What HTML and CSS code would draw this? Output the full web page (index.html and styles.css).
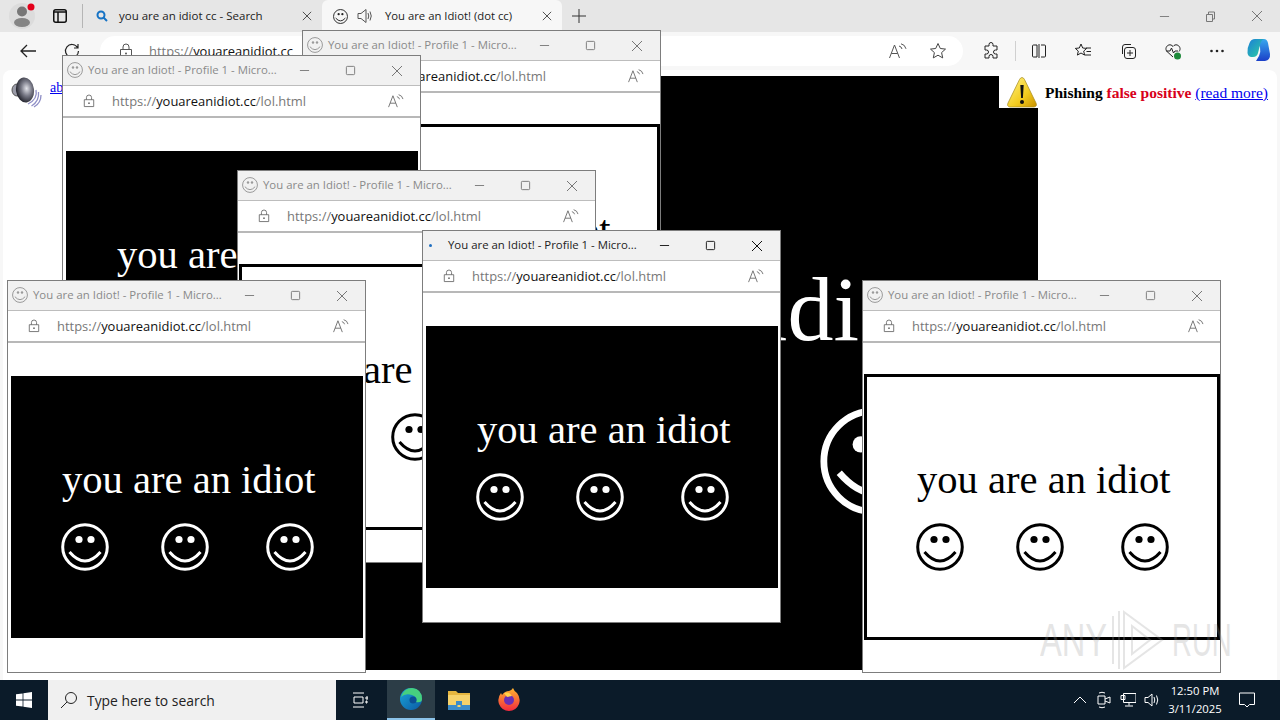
FILE: index.html
```html
<!DOCTYPE html>
<html lang="en">
<head>
    <meta charset="UTF-8">
    <title>You are an Idiot! (dot cc)</title>
    <link rel="stylesheet" href="styles.css">
</head>
<body>
    <svg class="defs" width="0" height="0">
        <symbol id="smile" viewBox="-24 -24 48 48">
            <circle r="22.3" fill="none" stroke="currentColor" stroke-width="3"/>
            <circle cx="-6" cy="-7.5" r="3.6" fill="currentColor"/>
            <circle cx="6" cy="-7.5" r="3.6" fill="currentColor"/>
            <path d="M-15.5 5Q0 23 15.5 5" fill="none" stroke="currentColor" stroke-width="3"/>
        </symbol>
        <symbol id="lock" viewBox="0 0 14 16">
            <path d="M1.5 6.5h11v8h-11zM4 6.5V4a3 3 0 0 1 6 0v2.5" fill="none" stroke="currentColor"/>
            <circle cx="7" cy="10.5" r="1" fill="currentColor"/>
        </symbol>
        <symbol id="read" viewBox="0 0 18 16">
            <path d="M.5 15L5.5 2l5 13M2.3 10.5h6.4" fill="none" stroke="currentColor"/>
            <path d="M10 3q2.500 .5 3 3M12 .8q4 .8 5 5" fill="none" stroke="currentColor"/>
        </symbol>
        <symbol id="min" viewBox="0 0 12 12"><path d="M1 6h10" stroke="currentColor" fill="none"/></symbol>
        <symbol id="max" viewBox="0 0 12 12"><rect x="1.500" y="1.500" width="9" height="9" rx="1" stroke="currentColor" fill="none"/></symbol>
        <symbol id="close" viewBox="0 0 12 12"><path d="M1 1l10 10M11 1L1 11" stroke="currentColor" fill="none"/></symbol>
    </svg>

    <!-- tab strip -->
    <div class="tabstrip">
        <div class="avatar">
            <svg width="28" height="28" viewBox="0 0 28 28"><circle cx="14" cy="14" r="13" fill="#dcdcdc"/><circle cx="14" cy="9.500" r="5" fill="#777"/><ellipse cx="14" cy="20.500" rx="8" ry="4.500" fill="#858585"/><circle cx="23" cy="5" r="3.500" fill="#e4001b"/></svg>
        </div>
        <svg class="vtabs" width="14" height="14" viewBox="0 0 14 14"><rect x=".75" y=".75" width="12.500" height="12.500" rx="2" fill="none" stroke="#111" stroke-width="1.500"/><path d="M1 3h12M5 3v10" stroke="#111" stroke-width="1.500"/></svg>
        <div class="tab-sep"></div>
        <div class="tab">
            <svg width="12" height="12" viewBox="0 0 12 12"><circle cx="5" cy="5" r="3.500" fill="none" stroke="#1673c5" stroke-width="2"/><path d="M7.500 7.500l3.500 3.500" stroke="#1673c5" stroke-width="2"/></svg>
            <span class="tab-text">you are an idiot cc - Search</span>
            <svg class="tab-x" width="10" height="10"><use href="#close"/></svg>
        </div>
        <div class="tab tab-active">
            <svg class="tab-smile" width="15" height="15"><use href="#smile"/></svg>
            <svg width="16" height="16" viewBox="0 0 16 16"><path d="M1 5.500h3L9 1.500v13L4 10.500H1z" fill="none" stroke="#555"/><path d="M11 5q1.500 3 0 6M13 3.500q2.500 4.500 0 9" fill="none" stroke="#555"/></svg>
            <span class="tab-text">You are an Idiot! (dot cc)</span>
            <svg class="tab-x" width="10" height="10"><use href="#close"/></svg>
        </div>
        <svg class="new-tab" width="14" height="14" viewBox="0 0 14 14"><path d="M7 0v14M0 7h14" stroke="#333"/></svg>
        <div class="window-controls">
            <svg width="11" height="11"><use href="#min"/></svg>
            <svg width="11" height="11" viewBox="0 0 11 11"><path d="M1.500 3.500h6v7h-6zM3.500 3.500V1h6v7H7.500" fill="none" stroke="currentColor"/></svg>
            <svg width="12" height="12"><use href="#close"/></svg>
        </div>
    </div>

    <!-- toolbar -->
    <div class="toolbar">
        <svg class="back" width="16" height="14" viewBox="0 0 16 14"><path d="M7 1L1 7l6 6M1 7h15" fill="none" stroke="#222" stroke-width="1.300"/></svg>
        <svg class="reload" width="16" height="16" viewBox="0 0 16 16"><path d="M13.500 4.500A6.500 6.500 0 1 0 14.500 8M14 1v4h-4" fill="none" stroke="#222" stroke-width="1.200"/></svg>
        <div class="address">
            <svg class="address-lock" width="14" height="16"><use href="#lock"/></svg>
            <span class="url">https://<b>youareanidiot.cc</b></span>
            <svg class="address-read" width="18" height="16"><use href="#read"/></svg>
            <svg width="18" height="18" viewBox="0 0 18 18"><path d="M9 1.500l2.300 5 5.200.6-3.900 3.500 1.100 5.300L9 13.200l-4.700 2.700 1.100-5.300L1.500 7.100l5.200-.6z" fill="none" stroke="#444"/></svg>
        </div>
        <div class="tools">
            <svg width="18" height="18" viewBox="0 0 18 18"><path d="M7 2.500a2 2 0 0 1 4 0V4h4v4h-1.500a2 2 0 0 0 0 4H15v4h-4v-1.500a2 2 0 0 0-4 0V16H3v-4h1.500a2 2 0 0 0 0-4H3V4h4z" fill="none" stroke="#222"/></svg>
            <div class="tool-sep"></div>
            <svg width="16" height="16" viewBox="0 0 16 16"><path d="M6 2H2.500A1 1 0 0 0 1.500 3v10a1 1 0 0 0 1 1H6zM8 1v14M10 2h3.500a1 1 0 0 1 1 1v10a1 1 0 0 1-1 1H10" fill="none" stroke="#222"/></svg>
            <svg width="18" height="18" viewBox="0 0 18 18"><path d="M7 2l1.700 4 4 .4-3 2.700.9 4L7 11l-3.600 2.100.9-4-3-2.700 4-.4zM12 6h5M12.500 9.500H17M11 13h6" fill="none" stroke="#222"/></svg>
            <svg width="18" height="18" viewBox="0 0 18 18"><rect x="5.500" y="5.500" width="11" height="11" rx="2.500" fill="none" stroke="#222"/><path d="M11 8v6M8 11h6M3.500 12V5a2.500 2.500 0 0 1 2.500-2.500h6" fill="none" stroke="#222"/></svg>
            <svg width="18" height="18" viewBox="0 0 18 18"><path d="M9 15L3 9.500C-.500 5.500 5.500 0 9 4.500 12.500 0 18.500 5.500 15 9.500" fill="none" stroke="#222"/><path d="M2 9h4l1.500-3 2 5L11 9h3" fill="none" stroke="#222"/><circle cx="13.500" cy="14" r="3.500" fill="#1f8a3b"/></svg>
            <svg class="more" width="16" height="4" viewBox="0 0 16 4"><circle cx="2.500" cy="2" r="1.300" fill="#222"/><circle cx="8" cy="2" r="1.300" fill="#222"/><circle cx="13.500" cy="2" r="1.300" fill="#222"/></svg>
            <svg class="copilot" width="24" height="26" viewBox="0 0 24 26"><defs><linearGradient id="cp1" x1="0" y1="0" x2="1" y2="1"><stop offset="0" stop-color="#1b7fd8"/><stop offset="1" stop-color="#2fd0a0"/></linearGradient><linearGradient id="cp2" x1="0" y1="0" x2="0" y2="1"><stop offset="0" stop-color="#38a8ee"/><stop offset="1" stop-color="#1b3fc8"/></linearGradient></defs><path d="M8 1h9q3 0 4 4l2 11q.500 6-5 7H9l3-5q2-4 1-9z" fill="url(#cp2)"/><path d="M8 1h9q-3 1-4 6l-2 8q-1 4-5 4H4q-3-.500-3.500-4Q0 10 2.500 5 4 1 8 1z" fill="url(#cp1)"/></svg>
        </div>
    </div>

    <!-- main page behind the popups -->
    <main class="page">
        <svg class="speaker" width="32" height="32" viewBox="0 0 32 32"><defs><radialGradient id="sp" cx=".6" cy=".45" r=".6"><stop offset="0" stop-color="#e2e3ea"/><stop offset=".5" stop-color="#777885"/><stop offset="1" stop-color="#22232c"/></radialGradient></defs><ellipse cx="6" cy="13" rx="5" ry="6" fill="#9a9ba8" stroke="#555"/><ellipse cx="14" cy="13" rx="9" ry="12.500" fill="url(#sp)" transform="rotate(-8 14 13)"/><path d="M25 13q2 9-8 14M27.500 15q1 9-7 14M30 18q0 8-7 12" fill="none" stroke="#8f8fc6" stroke-width="1.300"/></svg>
        <a class="about" href="#">about</a>
        <div class="idiot idiot-black idiot-huge">
            <p>you are an idiot</p>
            <div class="faces"><svg><use href="#smile"/></svg><svg><use href="#smile"/></svg><svg><use href="#smile"/></svg></div>
        </div>
        <div class="phish">
            <svg width="32" height="32" viewBox="0 0 32 32"><defs><linearGradient id="wa" x1="0" y1="0" x2="1" y2="1"><stop offset="0" stop-color="#fff58a"/><stop offset=".6" stop-color="#f3cb1e"/><stop offset="1" stop-color="#c99200"/></linearGradient></defs><path d="M16 1.500q1.500 0 2.500 2L30 27q1.500 3.500-2 4H4q-3.500-.500-2-4L13.500 3.500q1-2 2.500-2z" fill="url(#wa)" stroke="#a58a20" stroke-width=".7"/><path d="M14.300 9h3.400l-.8 13h-1.800z" fill="#111"/><circle cx="16" cy="26" r="2" fill="#111"/></svg>
            <p class="phish-text">Phishing <span class="phish-red">false positive</span> <a href="#">(read more)</a></p>
        </div>
    </main>

    <!-- taskbar -->
    <footer class="taskbar">
        <svg class="start" width="16" height="16" viewBox="0 0 16 16"><path d="M0 2.300l6.600-.9v6.200H0zM7.400 1.300L16 0v7.600H7.400zM0 8.400h6.600v6.200L0 13.700zM7.400 8.400H16V16l-8.600-1.300z" fill="#fff"/></svg>
        <div class="search">
            <svg width="18" height="18" viewBox="0 0 18 18"><circle cx="11" cy="7" r="5.500" fill="none" stroke="#222"/><path d="M7 11l-6 6" stroke="#222"/></svg>
            <span>Type here to search</span>
        </div>
        <div class="task-icon"><svg width="16" height="16" viewBox="0 0 16 16"><path d="M1 1h11M1 15h11M2 5h9v6H2zM14 5h2v2h-2zM14 9h1v2h-1z" fill="none" stroke="#fff"/></svg></div>
        <div class="task-icon task-active"><svg width="24" height="24" viewBox="0 0 24 24"><defs><linearGradient id="ed" x1="0" y1="0" x2="1" y2="1"><stop offset="0" stop-color="#1aa6d8"/><stop offset="1" stop-color="#0c59a4"/></linearGradient></defs><circle cx="12" cy="12" r="11" fill="url(#ed)"/><path d="M2 10Q5 1 13 1q10 1 10 11 0 4-6 3 2-5-4-7Q6 6 2 10z" fill="#46d07f"/><circle cx="14" cy="13" r="3.500" fill="#0b4f94"/></svg></div>
        <div class="task-icon"><svg width="22" height="20" viewBox="0 0 22 20"><path d="M0 1h8l2 2h12v4H0z" fill="#e5b53f"/><path d="M0 5h22v15H0z" fill="#f6d26b"/><rect x="0" y="15" width="22" height="5" fill="#3c8cc9"/><rect x="8" y="11" width="6" height="6" fill="#3c8cc9"/><rect x="9.500" y="15" width="3" height="2" fill="#f6d26b"/></svg></div>
        <div class="task-icon task-fox"><svg width="24" height="24" viewBox="0 0 24 24"><defs><linearGradient id="ff" x1="0" y1="0" x2="0" y2="1"><stop offset="0" stop-color="#ffb52e"/><stop offset="1" stop-color="#f3283f"/></linearGradient></defs><path d="M12 3q2 0 4-3 1 3 4 5 4 5 2 11-3 7-10 7T2 16Q0 10 4 5l1 2q3-4 7-4z" fill="url(#ff)"/><circle cx="12" cy="12" r="5" fill="#6b2fb5"/><path d="M7 5q5-2 8 3l-5 1z" fill="#ffd24a"/></svg></div>
        <div class="tray">
            <svg width="14" height="8" viewBox="0 0 14 8"><path d="M1 7l6-6 6 6" fill="none" stroke="#fff"/></svg>
            <svg width="14" height="18" viewBox="0 0 14 18"><path d="M1 5h7v8H1zM8 8l5-2v6l-5-2M2 2q3-1.500 6 0M2 16q3 1.500 6 0" fill="none" stroke="#fff"/></svg>
            <svg class="tray-net" width="16" height="16" viewBox="0 0 16 16"><path d="M3.500 1.500H16v9H3.500zM1 3.500h4v4H1zM9 10.500v3M5 14h8" fill="none" stroke="#fff"/></svg>
            <svg class="tray-vol" width="16" height="16" viewBox="0 0 16 16"><path d="M1 5.500h3L8 2v12L4 10.500H1zM10 5q1.500 3 0 6M12.500 3.500q2.500 4.500 0 9" fill="none" stroke="#fff"/></svg>
            <div class="clock">12:50 PM<br>3/11/2025</div>
            <svg class="notify" width="16" height="16" viewBox="0 0 16 16"><path d="M.5 1h15v11.500h-5L8 15l-2.500-2.500h-5z" fill="none" stroke="#fff"/></svg>
        </div>
    </footer>

    <!-- popup windows, lowest first -->
    <section class="popup popup-1">
        <header class="popup-title">
            <svg class="popup-fav" width="16" height="16"><use href="#smile"/></svg>
            <span>You are an Idiot! - Profile 1 - Micro...</span>
            <div class="popup-btns"><svg width="11" height="11"><use href="#min"/></svg><svg width="11" height="11"><use href="#max"/></svg><svg width="12" height="12"><use href="#close"/></svg></div>
        </header>
        <div class="popup-url"><svg width="12" height="14"><use href="#lock"/></svg><span class="url">https://<b>youareanidiot.cc</b>/lol.html</span><svg class="read" width="16" height="14"><use href="#read"/></svg></div>
        <div class="idiot idiot-white">
            <p>you are an idiot</p>
            <div class="faces"><svg><use href="#smile"/></svg><svg><use href="#smile"/></svg><svg><use href="#smile"/></svg></div>
        </div>
    </section>

    <section class="popup popup-2">
        <header class="popup-title">
            <svg class="popup-fav" width="16" height="16"><use href="#smile"/></svg>
            <span>You are an Idiot! - Profile 1 - Micro...</span>
            <div class="popup-btns"><svg width="11" height="11"><use href="#min"/></svg><svg width="11" height="11"><use href="#max"/></svg><svg width="12" height="12"><use href="#close"/></svg></div>
        </header>
        <div class="popup-url"><svg width="12" height="14"><use href="#lock"/></svg><span class="url">https://<b>youareanidiot.cc</b>/lol.html</span><svg class="read" width="16" height="14"><use href="#read"/></svg></div>
        <div class="idiot idiot-black">
            <p>you are an idiot</p>
            <div class="faces"><svg><use href="#smile"/></svg><svg><use href="#smile"/></svg><svg><use href="#smile"/></svg></div>
        </div>
    </section>

    <section class="popup popup-3">
        <header class="popup-title">
            <svg class="popup-fav" width="16" height="16"><use href="#smile"/></svg>
            <span>You are an Idiot! - Profile 1 - Micro...</span>
            <div class="popup-btns"><svg width="11" height="11"><use href="#min"/></svg><svg width="11" height="11"><use href="#max"/></svg><svg width="12" height="12"><use href="#close"/></svg></div>
        </header>
        <div class="popup-url"><svg width="12" height="14"><use href="#lock"/></svg><span class="url">https://<b>youareanidiot.cc</b>/lol.html</span><svg class="read" width="16" height="14"><use href="#read"/></svg></div>
        <div class="idiot idiot-white">
            <p>you are an idiot</p>
            <div class="faces"><svg><use href="#smile"/></svg><svg><use href="#smile"/></svg><svg><use href="#smile"/></svg></div>
        </div>
    </section>

    <section class="popup popup-4">
        <header class="popup-title">
            <svg class="popup-fav" width="16" height="16"><use href="#smile"/></svg>
            <span>You are an Idiot! - Profile 1 - Micro...</span>
            <div class="popup-btns"><svg width="11" height="11"><use href="#min"/></svg><svg width="11" height="11"><use href="#max"/></svg><svg width="12" height="12"><use href="#close"/></svg></div>
        </header>
        <div class="popup-url"><svg width="12" height="14"><use href="#lock"/></svg><span class="url">https://<b>youareanidiot.cc</b>/lol.html</span><svg class="read" width="16" height="14"><use href="#read"/></svg></div>
        <div class="idiot idiot-black">
            <p>you are an idiot</p>
            <div class="faces"><svg><use href="#smile"/></svg><svg><use href="#smile"/></svg><svg><use href="#smile"/></svg></div>
        </div>
    </section>

    <section class="popup popup-5">
        <header class="popup-title">
            <svg class="popup-fav" width="16" height="16"><use href="#smile"/></svg>
            <span>You are an Idiot! - Profile 1 - Micro...</span>
            <div class="popup-btns"><svg width="11" height="11"><use href="#min"/></svg><svg width="11" height="11"><use href="#max"/></svg><svg width="12" height="12"><use href="#close"/></svg></div>
        </header>
        <div class="popup-url"><svg width="12" height="14"><use href="#lock"/></svg><span class="url">https://<b>youareanidiot.cc</b>/lol.html</span><svg class="read" width="16" height="14"><use href="#read"/></svg></div>
        <div class="idiot idiot-white">
            <p>you are an idiot</p>
            <div class="faces"><svg><use href="#smile"/></svg><svg><use href="#smile"/></svg><svg><use href="#smile"/></svg></div>
        </div>
    </section>

    <section class="popup popup-6 popup-focus">
        <header class="popup-title">
            <i class="popup-dot"></i>
            <span>You are an Idiot! - Profile 1 - Micro...</span>
            <div class="popup-btns"><svg width="11" height="11"><use href="#min"/></svg><svg width="11" height="11"><use href="#max"/></svg><svg width="12" height="12"><use href="#close"/></svg></div>
        </header>
        <div class="popup-url"><svg width="12" height="14"><use href="#lock"/></svg><span class="url">https://<b>youareanidiot.cc</b>/lol.html</span><svg class="read" width="16" height="14"><use href="#read"/></svg></div>
        <div class="idiot idiot-black">
            <p>you are an idiot</p>
            <div class="faces"><svg><use href="#smile"/></svg><svg><use href="#smile"/></svg><svg><use href="#smile"/></svg></div>
        </div>
    </section>

    <!-- sandbox watermark -->
    <div class="watermark">
        <span class="mark-any">ANY</span>
        <svg width="56" height="64" viewBox="0 0 56 64"><path d="M3 8v48M9 3v58M14 4l38 28-38 28zM22 18l18 14-18 14z" fill="none" stroke="#999" stroke-width="2"/></svg>
        <span class="mark-run">RUN</span>
    </div>
</body>
</html>
```

FILE: styles.css
```css
html, body {
    margin: 0;
    padding: 0;
}

body {
    position: relative;
    display: flex;
    flex-direction: column;
    width: 1280px;
    height: 720px;
    overflow: hidden;
    background-color: #f7f7f7;
    font-family: "Open Sans", "Noto Sans", sans-serif;
    color: #222;
}

svg {
    flex-shrink: 0;
    display: block;
}

.defs {
    position: absolute;
}

/* Tab strip */
.tabstrip {
    display: flex;
    align-items: center;
    height: 32px;
    background-color: #e6e6e6;
    font-size: 11.5px;
}

.avatar {
    width: 28px;
    margin: -1px 0 0 8px;
}

.vtabs {
    margin-left: 17px;
}

.tab-sep {
    width: 1px;
    height: 24px;
    margin: 0 1px 0 15px;
    background-color: #b5b5b5;
}

.tab {
    display: flex;
    align-items: center;
    width: 238px;
    height: 32px;
    padding: 0 10px 0 12px;
    box-sizing: border-box;
}

.tab-text {
    flex: 1;
    margin: -2px 0 0 11px;
    white-space: nowrap;
}

.tab-x {
    color: #333;
}

.tab-active {
    width: 240px;
    padding-left: 11px;
    background-color: #f7f7f7;
    border-radius: 6px 6px 0 0;
    font-size: 11.3px;
}

.tab-active .tab-text {
    margin-left: 12px;
}

.tab-smile {
    margin-right: 9px;
    color: #222;
}

.new-tab {
    margin-left: 10px;
}

.window-controls {
    display: flex;
    align-items: center;
    gap: 35px;
    margin-left: auto;
    margin-right: 17px;
    color: #777;
}

/* Toolbar */
.toolbar {
    display: flex;
    align-items: center;
    height: 38px;
    background-color: #f7f7f7;
}

.back {
    margin-left: 20px;
}

.reload {
    margin-left: 28px;
}

.address {
    display: flex;
    align-items: center;
    width: 863px;
    height: 30px;
    margin-left: 20px;
    padding: 0 16px 0 19px;
    box-sizing: border-box;
    background-color: #fff;
    border-radius: 15px;
    color: #555;
}

.address .url {
    flex: 1;
    margin-left: 16px;
}

.address-read {
    margin-right: 22px;
}

.url {
    font-size: 12.95px;
    color: #777;
    white-space: nowrap;
}

.url b {
    font-weight: 400;
    color: #111;
}

.tools {
    display: flex;
    align-items: center;
    margin-left: 19px;
    gap: 27px;
}

.tool-sep {
    width: 1px;
    height: 20px;
    margin: 0 -12px;
    background-color: #d0d0d0;
}

.more {
    margin-right: -1px;
}

.copilot {
    margin-left: -4px;
}

/* Page behind the popups */
.page {
    position: relative;
    flex: 1;
    display: flex;
    justify-content: flex-end;
    margin: 0 3px;
    background-color: #fff;
    border-radius: 8px 8px 0 0;
    font-family: "Liberation Serif", serif;
}

.speaker {
    position: absolute;
    left: 8px;
    top: 7px;
}

.about {
    position: absolute;
    left: 47px;
    top: 10px;
    font-size: 14px;
    color: #00e;
}

.phish {
    position: absolute;
    left: 996px;
    top: 6px;
    display: flex;
    gap: 7px;
    width: 276px;
    height: 32px;
    background-color: #fff;
}

.phish svg {
    margin-left: 7px;
}

.phish-text {
    margin: 8px 0 0;
    font-size: 15.5px;
    font-weight: 700;
    color: #000;
    white-space: nowrap;
}

.phish-red {
    color: #d8001a;
}

.phish-text a {
    font-weight: 400;
    color: #00e;
}

/* The joke page itself, sized in em so the big copy scales with it */
.idiot {
    width: 8.67em;
    height: 6.453em;
    padding: 2.065em 0 0 1.255em;
    box-sizing: border-box;
    overflow: hidden;
    font-family: "Liberation Serif", serif;
    font-size: 40.6px;
    line-height: 1;
}

.idiot p {
    margin: 0;
    white-space: nowrap;
}

.idiot-black {
    background-color: #000;
    color: #fff;
}

.idiot-white {
    background-color: #fff;
    color: #000;
    outline: 3px solid #000;
    outline-offset: -1px;
}

.idiot-huge {
    align-self: flex-start;
    margin: 6px 239px 0 0;
    padding-top: 2.03em;
    font-size: 92px;
}

.faces {
    display: flex;
    gap: 1.28em;
    margin: .55em 0 0 -.025em;
}

.idiot-huge .faces {
    margin: .57em 0 0 0;
}

.faces svg {
    width: 1.182em;
    height: 1.182em;
}

.faces svg:last-child {
    margin-left: .123em;
}

/* Popup windows */
.popup {
    position: absolute;
    display: flex;
    flex-direction: column;
    width: 359px;
    height: 393px;
    box-sizing: border-box;
    background-color: #fff;
    border: 1px solid #7d7d7d;
}

.popup-1 { left: 302px; top: 30px; }
.popup-2 { left: 62px; top: 55px; }
.popup-3 { left: 237px; top: 170px; }
.popup-4 { left: 7px; top: 280px; }
.popup-5 { left: 862px; top: 280px; }
.popup-6 { left: 422px; top: 230px; }

.popup-title {
    display: flex;
    align-items: center;
    height: 29px;
    padding: 0 17px 0 4px;
    background-color: #f1f1f1;
    border-bottom: 1px solid #bdbdbd;
    font-size: 11.4px;
    color: #8a8a8a;
}

.popup-title span {
    flex: 1;
    margin: -2px 0 0 5px;
    white-space: nowrap;
}

.popup-fav {
    margin-top: -1px;
    color: #9a9a9a;
}

.popup-btns {
    display: flex;
    align-items: center;
    gap: 35px;
    color: #777;
}

.popup-focus .popup-title {
    color: #222;
}

.popup-focus .popup-btns {
    color: #111;
}

.popup-dot {
    width: 3px;
    height: 3px;
    margin: 0 11px 0 2px;
    background-color: #1e6ec0;
    border-radius: 50%;
}

.popup-url {
    display: flex;
    align-items: center;
    gap: 17px;
    height: 30px;
    padding: 0 16px 0 20px;
    background-color: #fff;
    border-bottom: 2px solid #b8b8b8;
    color: #666;
}

.popup-url .url {
    flex: 1;
}

.popup .idiot {
    margin: 33px 0 0 3px;
}

/* Taskbar */
.taskbar {
    display: flex;
    align-items: center;
    height: 40px;
    background-color: #0b1b29;
    color: #fff;
}

.start {
    margin: 0 16px;
}

.search {
    display: flex;
    align-items: center;
    gap: 9px;
    width: 288px;
    height: 40px;
    padding-left: 12px;
    box-sizing: border-box;
    background-color: #f0f0f0;
    font-size: 13.9px;
    color: #222;
}

.task-icon {
    display: flex;
    align-items: center;
    justify-content: center;
    width: 48px;
    height: 40px;
    box-sizing: border-box;
}

.task-active {
    margin-left: 3px;
    background-color: #2c3d47;
    border-bottom: 2px solid #8cc4ea;
}

.task-fox {
    margin-left: 2px;
}

.tray {
    display: flex;
    align-items: center;
    gap: 10px;
    margin-left: auto;
    margin-right: 25px;
}

.tray-net {
    margin-left: -1px;
}

.tray-vol {
    margin-left: -2px;
}

.clock {
    width: 70px;
    margin-left: -10px;
    font-size: 11.3px;
    line-height: 18px;
    text-align: center;
}

.notify {
    margin-left: -1px;
}

/* Watermark */
.watermark {
    position: absolute;
    left: 1040px;
    top: 608px;
    display: flex;
    align-items: center;
    gap: 3px;
    height: 64px;
    font-family: "Liberation Sans", sans-serif;
    font-size: 46px;
    color: #999;
    opacity: .25;
}

.watermark span {
    display: block;
    transform-origin: left;
}

.mark-any {
    width: 67px;
    transform: scaleX(.71);
}

.mark-run {
    width: 60px;
    margin-left: 3px;
    transform: scaleX(.6);
}
```
